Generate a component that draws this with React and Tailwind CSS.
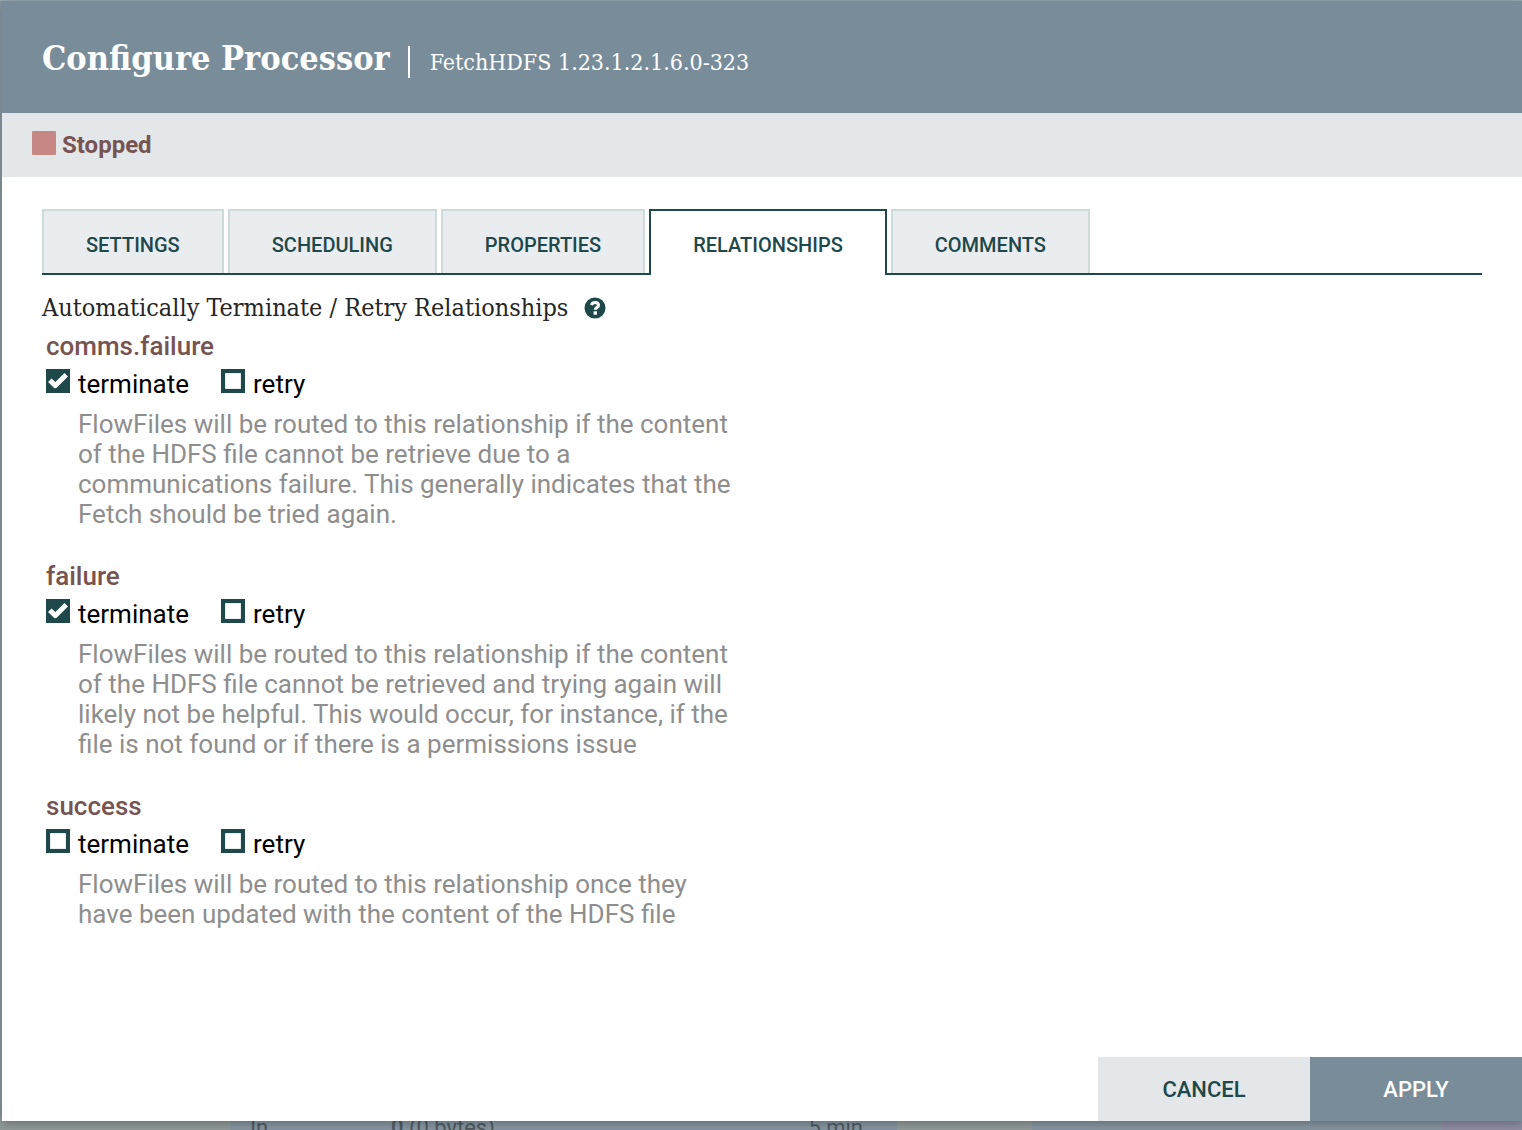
import React from "react";

const slab = "font-['Roboto_Slab','DejaVu_Serif_Condensed','DejaVu_Serif',serif]";

const tabs = ["SETTINGS", "SCHEDULING", "PROPERTIES", "RELATIONSHIPS", "COMMENTS"];

const relationships = [
  {
    name: "comms.failure",
    terminate: true,
    description:
      "FlowFiles will be routed to this relationship if the content of the HDFS file cannot be retrieve due to a communications failure. This generally indicates that the Fetch should be tried again.",
  },
  {
    name: "failure",
    terminate: true,
    description:
      "FlowFiles will be routed to this relationship if the content of the HDFS file cannot be retrieved and trying again will likely not be helpful. This would occur, for instance, if the file is not found or if there is a permissions issue",
  },
  {
    name: "success",
    terminate: false,
    description:
      "FlowFiles will be routed to this relationship once they have been updated with the content of the HDFS file",
  },
];

function Checkbox({ id, label, checked }) {
  return (
    <div className="flex items-start gap-2">
      <span className="grid size-6">
        <input
          id={id}
          type="checkbox"
          defaultChecked={checked}
          className="peer col-start-1 row-start-1 size-6 appearance-none border-4 border-[#1e484a] bg-white shadow-[inset_0_0_1px_#1e484a] checked:bg-[#1e484a]"
        />
        <svg
          viewBox="0 0 24 24"
          className="pointer-events-none invisible col-start-1 row-start-1 size-6 peer-checked:visible"
          aria-hidden="true"
        >
          <path
            d="M3.8 11.2 9.4 16.6 20.2 5.8"
            fill="none"
            stroke="#fff"
            strokeWidth="5"
            strokeLinejoin="round"
          />
        </svg>
      </span>
      <label htmlFor={id} className="leading-[30px] text-black">
        {label}
      </label>
    </div>
  );
}

function Relationship({ name, terminate, description }) {
  return (
    <section className="min-h-[198px] max-w-[692px] text-[26px] leading-[30px]">
      <h3 className="font-medium text-[#775351]">{name}</h3>
      <div className="mt-2 flex gap-8">
        <Checkbox id={`${name}-terminate`} label="terminate" checked={terminate} />
        <Checkbox id={`${name}-retry`} label="retry" checked={false} />
      </div>
      <p className="mt-[10px] pl-8 text-[#8e8e8e]">{description}</p>
    </section>
  );
}

function HelpIcon() {
  return (
    <svg viewBox="0 0 22 22" className="size-[22px]" aria-hidden="true">
      <circle cx="11" cy="11" r="10.5" fill="#1e484a" />
      <path
        d="M7.4 8C8.1 6.3 9.3 5.5 11 5.5c2.1 0 3.4 1.1 3.4 2.7 0 2.4-3.1 2.3-3.1 4.6"
        fill="none"
        stroke="#fff"
        strokeWidth="3.2"
      />
      <rect x="9.6" y="14.3" width="3.4" height="3.4" fill="#fff" />
    </svg>
  );
}

export default function App() {
  return (
    <div className="flex h-screen flex-col overflow-hidden bg-[#9aadb4] pt-px font-['Roboto',sans-serif]">
      <div className="flex min-h-0 flex-1 bg-[#8d9ba2]">
        <main className="z-10 ml-0.5 flex min-w-0 flex-1 flex-col bg-white shadow-[0_2px_10px_rgba(0,0,0,0.3)]">
          <header className={`${slab} flex h-28 shrink-0 items-center bg-[#788d99] pt-0.5 pl-10 text-white`}>
            <h1 className="text-[34px] leading-[48px] font-bold">Configure Processor</h1>
            <span className="mt-2 ml-[18px] h-8 w-0.5 bg-white" />
            <span className="mt-2 ml-5 text-[23px] leading-8">FetchHDFS 1.23.1.2.1.6.0-323</span>
          </header>

          <div className="flex h-16 shrink-0 items-center bg-[#e3e7ea] pl-[30px]">
            <span className="mb-1 size-6 rounded-[1px] bg-[#c68885]" />
            <span className="ml-1.5 text-[24px] leading-8 font-bold text-[#775351]">Stopped</span>
          </div>

          <div className="min-h-0 flex-1 px-10 pt-8">
            <div role="tablist" className="flex gap-1 border-b-2 border-[#1e484a]">
              {tabs.map((tab) => (
                <button
                  key={tab}
                  role="tab"
                  aria-selected={tab === "RELATIONSHIPS"}
                  className="h-16 border-2 border-b-0 border-[#cddcda] bg-[#e9edf0] px-[42px] pt-1.5 text-[20px] font-medium text-[#1e484a] aria-selected:-mb-0.5 aria-selected:h-[66px] aria-selected:rounded-b-[2px] aria-selected:border-[#1e484a] aria-selected:bg-white aria-selected:pb-0.5"
                >
                  {tab}
                </button>
              ))}
            </div>

            <div className="mt-[18px] flex items-center gap-4">
              <h2 className={`${slab} text-[25px] leading-[30px] text-[#262626]`}>
                Automatically Terminate / Retry Relationships
              </h2>
              <HelpIcon />
            </div>

            <div className="mt-2 flex flex-col gap-8 pl-1">
              {relationships.map((item) => (
                <Relationship key={item.name} {...item} />
              ))}
            </div>
          </div>

          <footer className="flex h-16 shrink-0 justify-end text-[22px] font-medium">
            <button className="w-[212px] bg-[#e3e7ea] text-[#1e484a]">CANCEL</button>
            <button className="w-[212px] bg-[#788d99] text-white">APPLY</button>
          </footer>
        </main>
      </div>

      <div className="flex h-[9px] shrink-0 overflow-hidden bg-[#909b99] text-[22px] leading-[22px] text-[#4f5a61]">
        <div className="w-[230px] shrink-0" />
        <div className="flex w-[667px] shrink-0 bg-[#8696a0] pl-5">
          <span className="-mt-1 w-[141px]">In</span>
          <span className="-mt-1 flex-1">
            <b className="font-medium">0</b> (0 bytes)
          </span>
          <span className="-mt-1 pr-[34px]">5 min</span>
        </div>
        <div className="w-[135px] shrink-0" />
        <div className="flex-1 bg-[#8696a0]" />
        <div className="w-[81px] shrink-0 bg-[#8f8da3]" />
      </div>
    </div>
  );
}
